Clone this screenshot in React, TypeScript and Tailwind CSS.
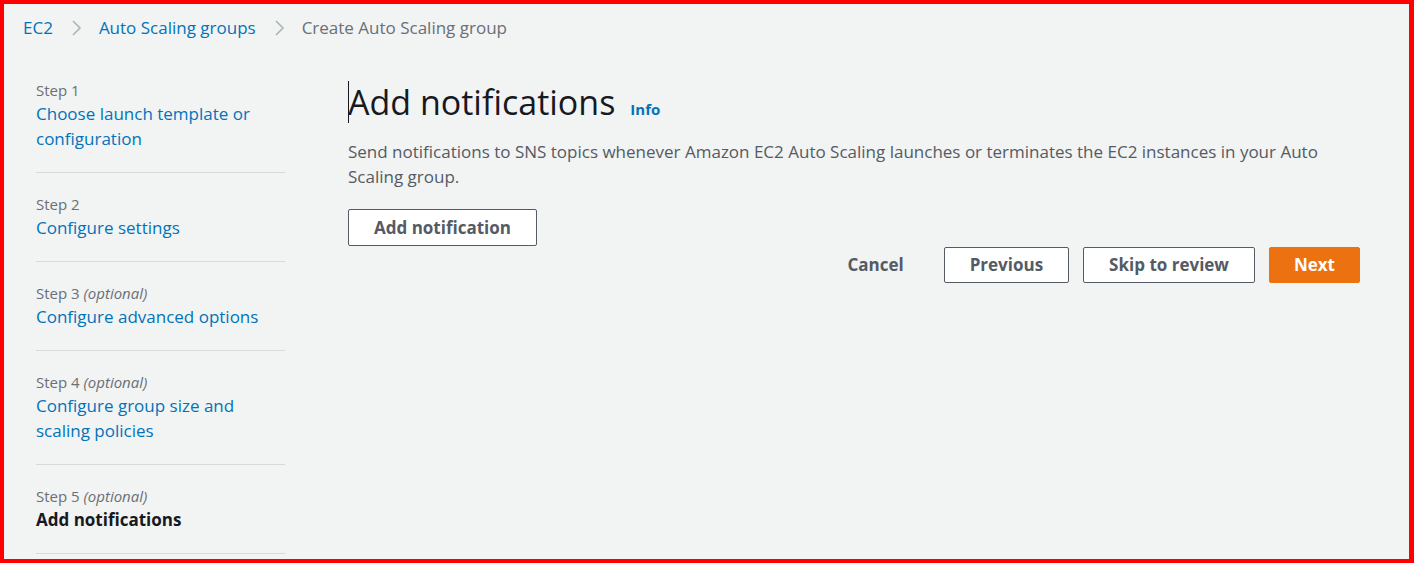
import React from "react";

const steps = [
  { label: "Step 1", optional: false, title: "Choose launch template or configuration" },
  { label: "Step 2", optional: false, title: "Configure settings" },
  { label: "Step 3", optional: true, title: "Configure advanced options" },
  { label: "Step 4", optional: true, title: "Configure group size and scaling policies" },
  { label: "Step 5", optional: true, title: "Add notifications", current: true },
];

const Chevron = () => (
  <svg width="12" height="18" viewBox="0 0 12 18" className="shrink-0">
    <polyline points="3,2 10,9 3,16" fill="none" stroke="#aab7b8" strokeWidth="1.6" />
  </svg>
);

const App = () => {
  return (
    <div
      className="h-[563px] w-full overflow-hidden border-4 border-r-[5px] border-[#ff0000] bg-[#f2f3f3] text-[17px] text-[#16191f]"
      style={{ fontFamily: '"Open Sans", "Noto Sans", sans-serif' }}
    >
      {/* breadcrumb */}
      <nav className="flex h-[44px] items-center gap-[17px] pl-[19px] pt-[4px] leading-[22px]">
        <span className="text-[#0073bb]">EC2</span>
        <Chevron />
        <span className="text-[#0073bb]">Auto Scaling groups</span>
        <Chevron />
        <span className="text-[#687078]">Create Auto Scaling group</span>
      </nav>

      <div className="flex pl-[32px] pt-[31px]">
        {/* wizard steps */}
        <ul className="w-[249px] shrink-0">
          {steps.map((s, i) => (
            <li
              key={s.label}
              className={
                "border-b border-[#d5dbdb] pb-[21px] " + (i === 0 ? "pt-0" : "pt-[20px]")
              }
            >
              <div className="text-[15px] leading-[22px] text-[#687078]">
                {s.label}
                {s.optional && <i> (optional)</i>}
              </div>
              <div
                className={
                  "leading-[25px] " + (s.current ? "font-bold text-[#16191f]" : "text-[#0073bb]")
                }
              >
                {s.title}
              </div>
            </li>
          ))}
        </ul>

        {/* main */}
        <main className="ml-[63px] flex-1 pr-[49px] pt-[1px]">
          <div className="flex items-baseline gap-[15px]">
            <h1 className="relative text-[34px] leading-[44px] font-normal">
              <span className="absolute left-0 top-[1px] h-[42px] w-px bg-[#16191f]" />
              Add notifications
            </h1>
            <span className="text-[15px] font-bold text-[#0073bb]">Info</span>
          </div>
          <p className="mt-[15px] leading-[25px] text-[#545b64]">
            Send notifications to SNS topics whenever Amazon EC2 Auto Scaling launches or
            terminates the EC2 instances in your Auto Scaling group.
          </p>
          <button className="mt-[20px] h-[37px] rounded-[2px] border border-[#545b64] bg-white px-[25px] font-bold text-[#545b64]">
            Add notification
          </button>

          <div className="mt-px flex items-center justify-end gap-[14px]">
            <button className="h-[36px] px-[26px] font-bold text-[#545b64]">Cancel</button>
            <button className="h-[36px] rounded-[2px] border border-[#545b64] bg-white px-[25px] font-bold text-[#545b64]">
              Previous
            </button>
            <button className="h-[36px] rounded-[2px] border border-[#545b64] bg-white px-[25px] font-bold text-[#545b64]">
              Skip to review
            </button>
            <button className="h-[36px] rounded-[2px] border border-[#ec7211] bg-[#ec7211] px-[24px] font-bold text-white">
              Next
            </button>
          </div>
        </main>
      </div>
    </div>
  );
};

export default App;
